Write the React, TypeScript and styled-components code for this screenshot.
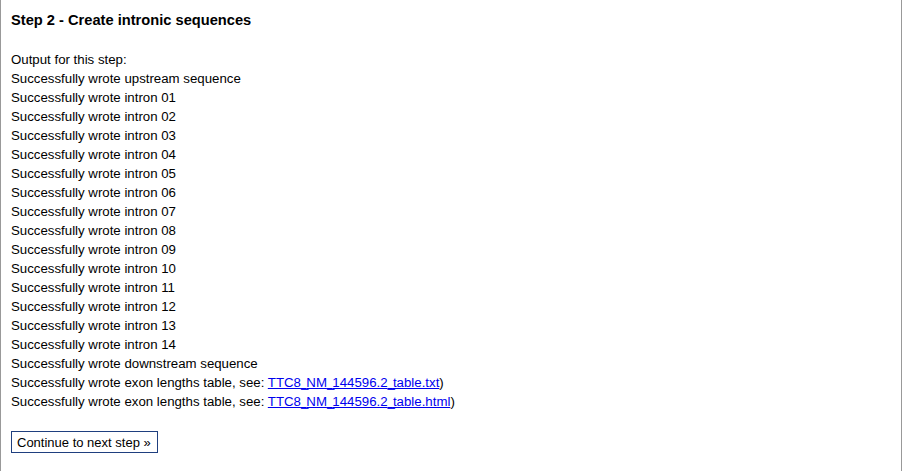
import React from "react";
import styled, { createGlobalStyle } from "styled-components";

const Global = createGlobalStyle`
  html, body { margin: 0; padding: 0; background: #fff; }
  body { font-family: "Liberation Sans", Arial, sans-serif; color: #000; }
`;

const Panel = styled.div`
  box-sizing: border-box;
  width: 902px;
  min-height: 471px;
  border-left: 1px solid #999;
  border-right: 1px solid #999;
  padding: 11px 10px 0 10px;
`;

const Title = styled.h2`
  margin: 0 0 21px 0;
  font-size: 14.67px;
  font-weight: bold;
  line-height: 18px;
`;

const Output = styled.div`
  font-size: 13.25px;
  line-height: 19px;
`;

const Line = styled.div``;

const FileLink = styled.a`
  color: #00e;
  text-decoration: underline;
`;

const Sep = styled.span`
  letter-spacing: -2px;
`;

const Button = styled.button`
  margin-top: 20px;
  box-sizing: border-box;
  height: 22px;
  padding: 0 6px 0 5px;
  border: 1px solid #1f3f7f;
  background: #fff;
  font-family: "Liberation Sans", Arial, sans-serif;
  font-size: 13px;
  color: #000;
  cursor: pointer;
`;

const introns = Array.from({ length: 14 }, (_, i) => String(i + 1).padStart(2, "0"));

function FileName({ name }: { name: string }) {
  const parts = name.split("_");
  return (
    <FileLink href="#">
      {parts.map((p, i) => (
        <React.Fragment key={i}>
          {i > 0 && <Sep>_</Sep>}
          {p}
        </React.Fragment>
      ))}
    </FileLink>
  );
}

export default function App() {
  return (
    <>
      <Global />
      <Panel>
        <Title>Step 2 - Create intronic sequences</Title>
        <Output>
          <Line>Output for this step:</Line>
          <Line>Successfully wrote upstream sequence</Line>
          {introns.map((n) => (
            <Line key={n}>Successfully wrote intron {n}</Line>
          ))}
          <Line>Successfully wrote downstream sequence</Line>
          <Line>
            Successfully wrote exon lengths table, see: <FileName name="TTC8_NM_144596.2_table.txt" />)
          </Line>
          <Line>
            Successfully wrote exon lengths table, see: <FileName name="TTC8_NM_144596.2_table.html" />)
          </Line>
        </Output>
        <Button>Continue to next step »</Button>
      </Panel>
    </>
  );
}
